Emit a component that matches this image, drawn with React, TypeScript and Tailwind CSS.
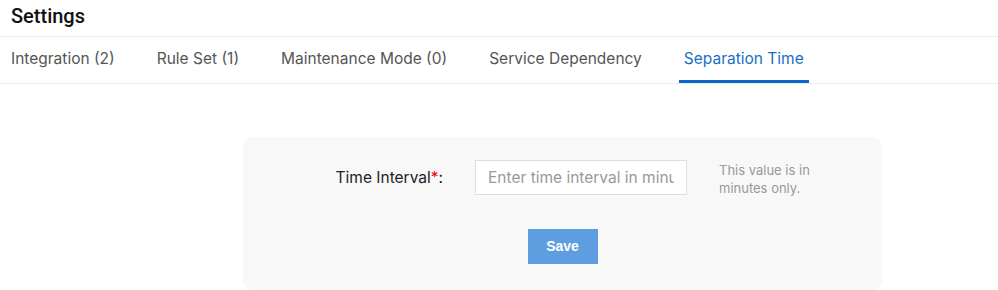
const tabs = [
  { label: 'Integration (2)', active: false },
  { label: 'Rule Set (1)', active: false },
  { label: 'Maintenance Mode (0)', active: false },
  { label: 'Service Dependency', active: false },
  { label: 'Separation Time', active: true },
]

export default function App() {
  return (
    <div className="h-[290px] w-[998px] overflow-hidden bg-white font-['Inter',sans-serif]">
      <div className="flex h-[37px] items-center border-b border-[#ececec] px-[11px] pb-[5px]">
        <h1 className="font-['Roboto',sans-serif] text-[20px] font-medium text-[#111]">Settings</h1>
      </div>

      <div className="flex h-[47px] gap-[32px] border-b border-[#ececec] pl-[6px]">
        {tabs.map((t) => (
          <div
            key={t.label}
            className={
              t.active
                ? 'flex items-center border-b-[3px] border-[#0b68c9] px-[5px] text-[15.5px] text-[#1a6ec7]'
                : 'flex items-center border-b-[3px] border-transparent px-[5px] text-[15.5px] text-[#555]'
            }
          >
            {t.label}
          </div>
        ))}
      </div>

      <div className="ml-[243px] mt-[53px] h-[153px] w-[639px] rounded-[10px] bg-[#f8f8f8] pt-[23px]">
        <div className="flex items-start">
          <label className="flex h-[35px] w-[200px] items-center justify-end text-[15.5px] text-[#222]">
            Time Interval<span className="text-[#e00]">*</span>:
          </label>
          <input
            placeholder="Enter time interval in minutes"
            className="ml-[32px] h-[35px] w-[212px] border border-[#dedede] bg-white px-[12px] text-[15.5px] text-[#333] placeholder:text-[#999] outline-none"
          />
          <p className="ml-[32px] mt-[1px] w-[110px] text-[13px] leading-[18px] text-[#999]">
            This value is in minutes only.
          </p>
        </div>
        <div className="mt-[32px] flex justify-center">
          <button className="h-[35px] w-[70px] bg-[#5e9ddf] font-['Liberation_Sans',sans-serif] text-[14px] font-bold text-white">
            Save
          </button>
        </div>
      </div>
    </div>
  )
}
